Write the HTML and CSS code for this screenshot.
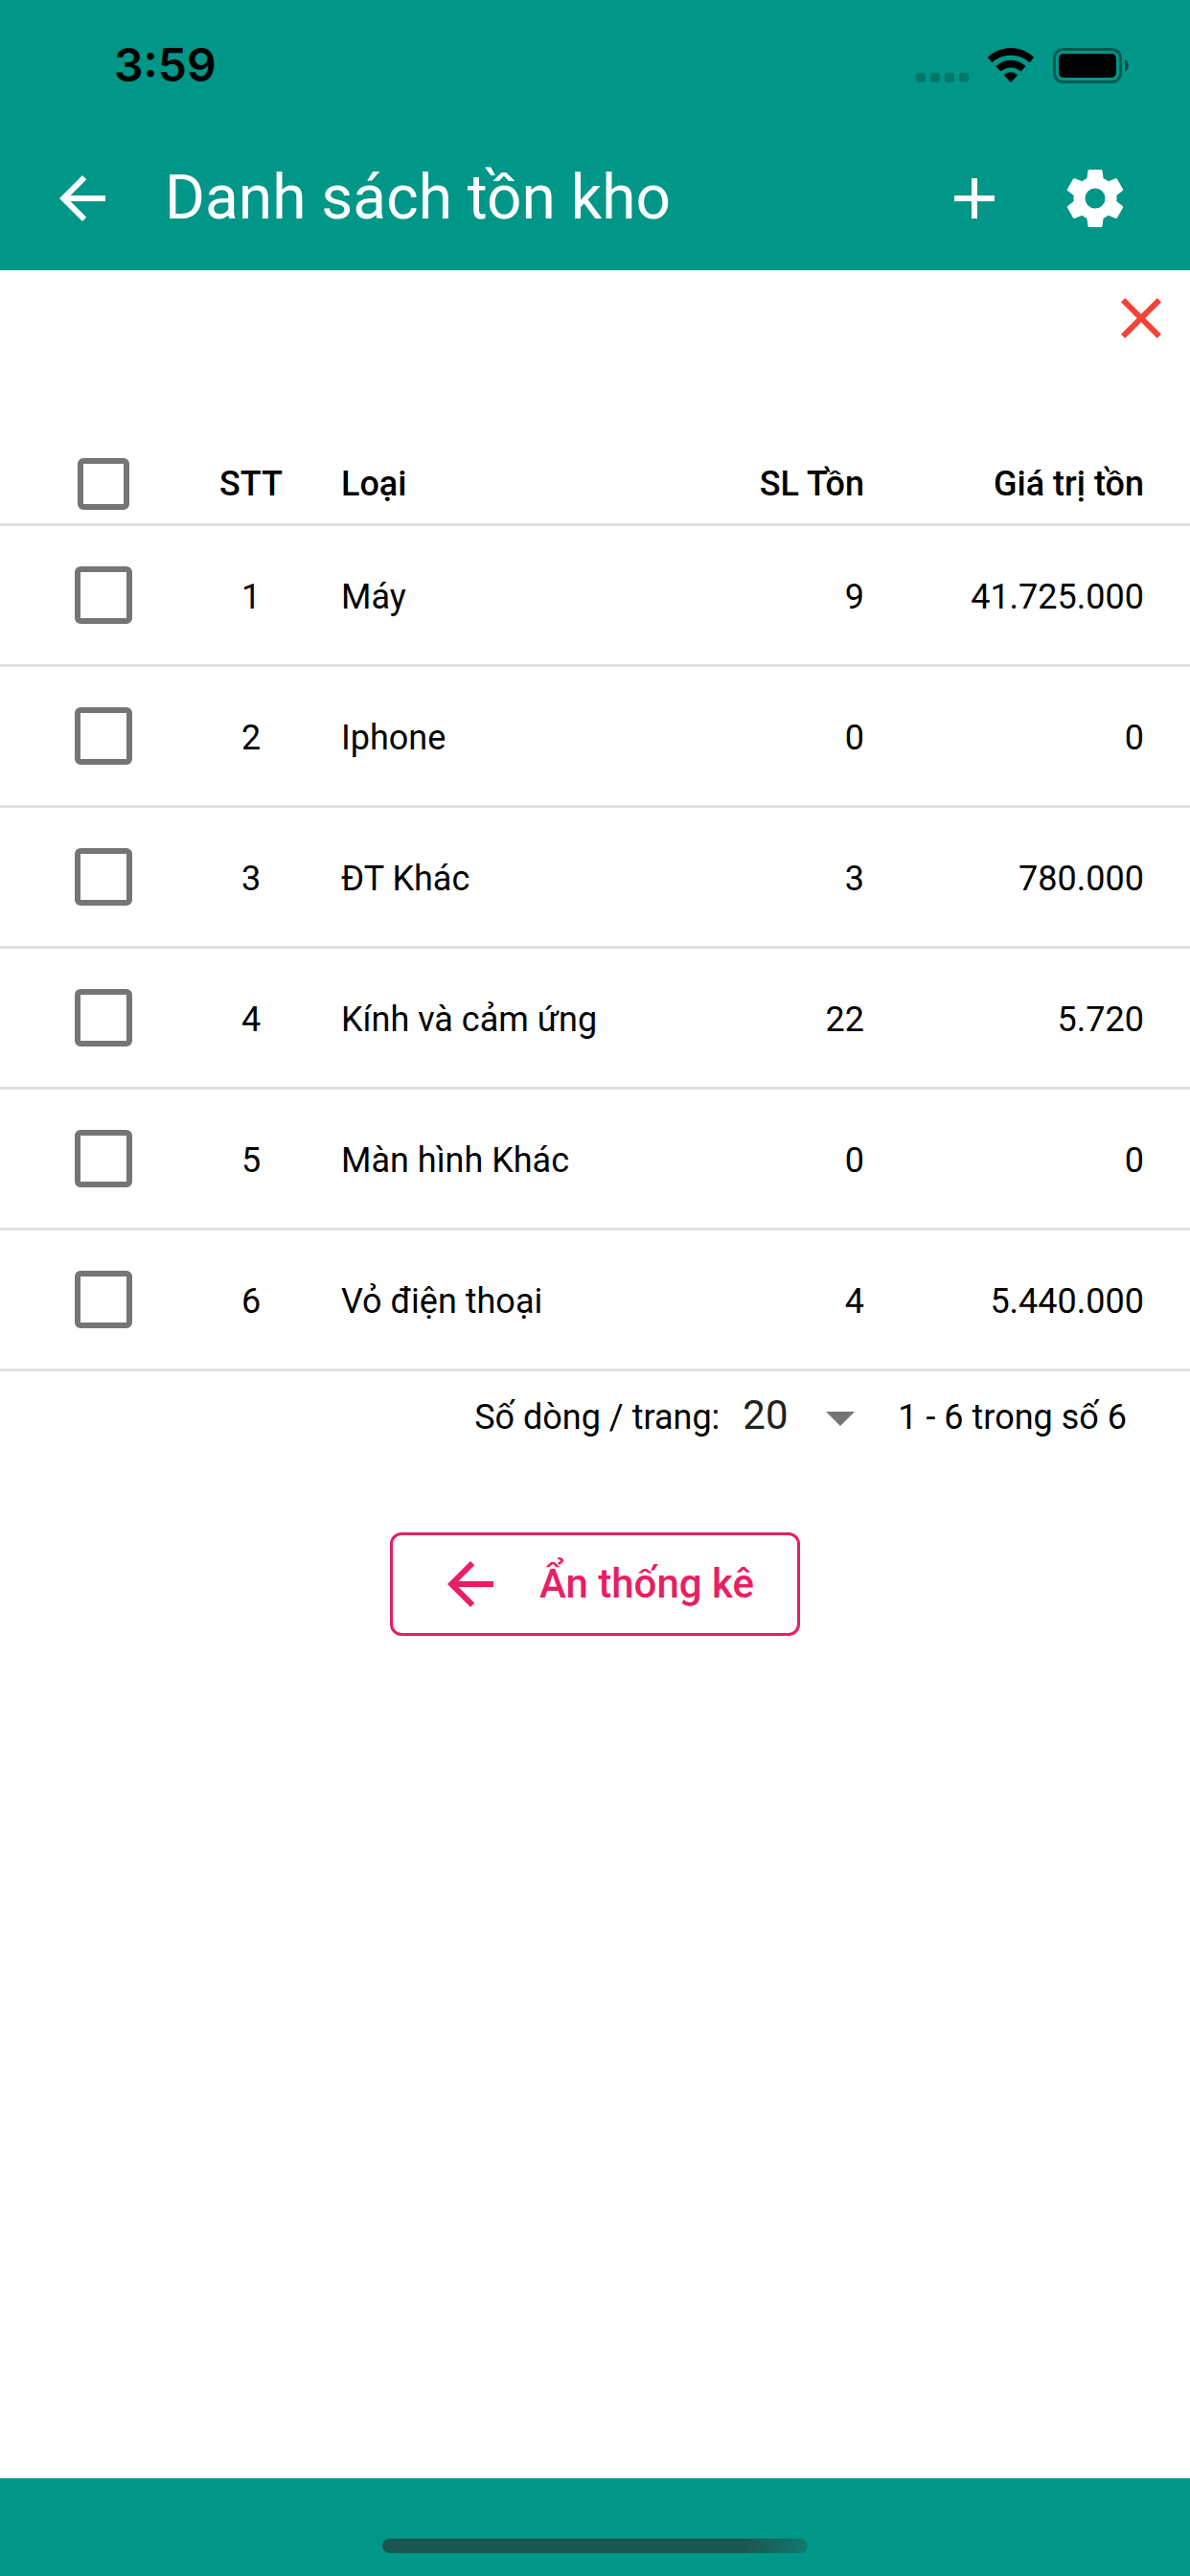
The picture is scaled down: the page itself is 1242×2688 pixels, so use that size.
FILE: index.html
```
<!DOCTYPE html>
<html lang="vi">

<head>
    <meta charset="UTF-8">
    <meta name="viewport" content="width=device-width, initial-scale=1.0">
    <title>Danh sách tồn kho</title>
    <link rel="stylesheet" href="styles.css">
</head>

<body>
    <header class="header">
        <div class="status">
            <span class="time">3:59</span>
            <div class="status-icons">
                <svg width="55" height="36" viewBox="0 0 55 36" fill="#000" fill-opacity=".2">
                    <rect x="0" y="26" width="10" height="10" rx="3" />
                    <rect x="15" y="26" width="10" height="10" rx="3" />
                    <rect x="30" y="26" width="10" height="10" rx="3" />
                    <rect x="45" y="26" width="10" height="10" rx="3" />
                </svg>
                <svg width="48" height="36" viewBox="0 0 48 36">
                    <path d="M24 0C14.800 0 6.500 3.600 .4 9.400q-.6.600 0 1.200L4 14.700q.6.600 1.200 0C10.200 10.300 16.800 7.800 24 7.800s13.800 2.500 18.800 6.900q.6.600 1.200 0l3.600-4.100q.6-.6 0-1.200C41.500 3.600 33.200 0 24 0zM24 12.800c-5.800 0-11 2.200-15 5.800q-.6.600 0 1.200l4 4.300q.6.600 1.200 0c2.600-2.300 6-3.700 9.800-3.700s7.200 1.400 9.800 3.700q.6.600 1.200 0l4-4.300q.6-.6 0-1.200c-4-3.600-9.200-5.800-15-5.800zM24 25.300c-2.500 0-4.800.9-6.500 2.400q-.6.600 0 1.200l5.900 6.500q.6.600 1.200 0l5.900-6.500q.6-.6 0-1.200c-1.700-1.500-4-2.400-6.500-2.400z" />
                </svg>
                <svg width="79" height="37" viewBox="0 0 79 37">
                    <rect x="1.500" y="1.500" width="69" height="34" rx="9" fill="none" stroke="#000" stroke-opacity=".4" stroke-width="3" />
                    <rect x="6" y="6" width="60" height="25" rx="5" />
                    <path d="M75 12c5 2 5 11 0 13z" fill-opacity=".5" />
                </svg>
            </div>
        </div>
        <div class="toolbar">
            <button class="icon-btn" type="button" aria-label="Quay lại">
                <svg class="icon" viewBox="0 0 24 24"><path d="M20 11H7.830l5.590-5.590L12 4l-8 8 8 8 1.410-1.410L7.830 13H20v-2z" /></svg>
            </button>
            <h1 class="title">Danh sách tồn kho</h1>
            <button class="icon-btn" type="button" aria-label="Thêm">
                <svg class="icon" viewBox="0 0 24 24"><path d="M19 13h-6v6h-2v-6H5v-2h6V5h2v6h6v2z" /></svg>
            </button>
            <button class="icon-btn" type="button" aria-label="Cài đặt">
                <svg class="icon" viewBox="0 0 24 24"><path d="M12 15.500A3.500 3.500 0 0 1 8.500 12 3.500 3.500 0 0 1 12 8.500a3.500 3.500 0 0 1 3.500 3.500 3.500 3.500 0 0 1-3.500 3.500m7.430-2.530c.04-.32.07-.64.07-.97 0-.33-.03-.66-.07-1l2.110-1.630c.19-.15.24-.42.12-.64l-2-3.460c-.12-.22-.39-.31-.61-.22l-2.490 1c-.52-.39-1.060-.73-1.690-.98l-.37-2.650A.506.506 0 0 0 14 2h-4c-.25 0-.46.18-.5.42l-.37 2.650c-.63.25-1.170.59-1.690.98l-2.490-1c-.22-.09-.49 0-.61.22l-2 3.460c-.13.22-.07.49.12.64L4.570 11c-.04.34-.07.67-.07 1 0 .33.03.65.07.97l-2.110 1.660c-.19.15-.25.42-.12.64l2 3.460c.12.22.39.3.61.22l2.490-1.010c.52.400 1.060.740 1.690.990l.37 2.650c.04.240.250.420.500.420h4c.25 0 .46-.18.5-.42l.37-2.650c.63-.26 1.170-.59 1.690-.99l2.490 1.010c.22.08.49 0 .61-.22l2-3.460c.12-.22.07-.49-.12-.64l-2.110-1.660z" /></svg>
            </button>
        </div>
    </header>

    <main class="main">
        <div class="close-row">
            <button class="icon-btn close" type="button" aria-label="Đóng">
                <svg class="icon" viewBox="0 0 24 24"><path d="M19 6.410L17.590 5 12 10.590 6.410 5 5 6.410 10.590 12 5 17.590 6.410 19 12 13.410 17.590 19 19 17.590 13.410 12z" /></svg>
            </button>
        </div>

        <table class="table">
            <thead>
                <tr>
                    <th class="check"><input type="checkbox" aria-label="Chọn tất cả"></th>
                    <th class="stt">STT</th>
                    <th class="loai">Loại</th>
                    <th class="sl">SL Tồn</th>
                    <th class="gia">Giá trị tồn</th>
                </tr>
            </thead>
            <tbody>
                <tr>
                    <td class="check"><input type="checkbox" aria-label="Chọn Máy"></td>
                    <td class="stt">1</td>
                    <td class="loai">Máy</td>
                    <td class="sl">9</td>
                    <td class="gia">41.725.000</td>
                </tr>
                <tr>
                    <td class="check"><input type="checkbox" aria-label="Chọn Iphone"></td>
                    <td class="stt">2</td>
                    <td class="loai">Iphone</td>
                    <td class="sl">0</td>
                    <td class="gia">0</td>
                </tr>
                <tr>
                    <td class="check"><input type="checkbox" aria-label="Chọn ĐT Khác"></td>
                    <td class="stt">3</td>
                    <td class="loai">ĐT Khác</td>
                    <td class="sl">3</td>
                    <td class="gia">780.000</td>
                </tr>
                <tr>
                    <td class="check"><input type="checkbox" aria-label="Chọn Kính và cảm ứng"></td>
                    <td class="stt">4</td>
                    <td class="loai">Kính và cảm ứng</td>
                    <td class="sl">22</td>
                    <td class="gia">5.720</td>
                </tr>
                <tr>
                    <td class="check"><input type="checkbox" aria-label="Chọn Màn hình Khác"></td>
                    <td class="stt">5</td>
                    <td class="loai">Màn hình Khác</td>
                    <td class="sl">0</td>
                    <td class="gia">0</td>
                </tr>
                <tr>
                    <td class="check"><input type="checkbox" aria-label="Chọn Vỏ điện thoại"></td>
                    <td class="stt">6</td>
                    <td class="loai">Vỏ điện thoại</td>
                    <td class="sl">4</td>
                    <td class="gia">5.440.000</td>
                </tr>
            </tbody>
        </table>

        <div class="paging">
            <label for="rows">Số dòng / trang:</label>
            <div class="select">
                <select id="rows">
                    <option>20</option>
                    <option>50</option>
                    <option>100</option>
                </select>
                <svg class="icon" viewBox="0 0 24 24"><path d="M7 10l5 5 5-5z" /></svg>
            </div>
            <span>1 - 6 trong số 6</span>
        </div>

        <button class="hide-btn" type="button">
            <svg class="icon" viewBox="0 0 24 24"><path d="M20 11H7.830l5.590-5.590L12 4l-8 8 8 8 1.410-1.410L7.830 13H20v-2z" /></svg>
            Ẩn thống kê
        </button>
    </main>

    <footer class="footer">
        <div class="home-bar"></div>
    </footer>
</body>

</html>
```
FILE: styles.css
```
* {
    margin: 0;
    padding: 0;
    box-sizing: border-box;
}

body {
    display: flex;
    flex-direction: column;
    min-height: 100vh;
    font-family: Roboto, "Noto Sans", sans-serif;
    font-size: 36px;
    line-height: 48px;
    color: #000;
    background-color: #fff;
}

button {
    font: inherit;
    color: inherit;
    border: none;
    background: none;
    cursor: pointer;
}

svg {
    display: block;
}

.icon {
    width: 72px;
    height: 72px;
    fill: currentColor;
}

.header {
    color: #fff;
    background-color: #009688;
}

.status {
    display: flex;
    align-items: center;
    justify-content: space-between;
    height: 132px;
    padding: 4px 64px 0 119px;
    color: #000;
}

.time {
    font-family: Inter, sans-serif;
    font-size: 48px;
    font-weight: 600;
}

.status-icons {
    display: flex;
    align-items: center;
    gap: 20px;
}

.toolbar {
    display: flex;
    align-items: center;
    height: 150px;
    padding: 0 63px 0 50px;
}

.toolbar .icon-btn + .icon-btn {
    margin-left: 54px;
}

.title {
    flex: 1;
    padding-left: 50px;
    font-size: 64px;
    line-height: 72px;
    font-weight: 400;
}

.main {
    flex: 1;
}

.close-row {
    display: flex;
    justify-content: flex-end;
    height: 177px;
    padding: 14px 15px 0;
}

.close {
    height: 72px;
    color: #f44336;
}

.table {
    width: 100%;
    table-layout: fixed;
    border-collapse: separate;
    border-spacing: 0;
}

.table th,
.table td {
    height: 147px;
    padding: 4px 48px 0;
    border-bottom: 3px solid #e0e0e0;
    font-weight: 400;
    text-align: left;
    white-space: nowrap;
}

.table th {
    height: 90px;
    font-weight: 500;
}

.table .check {
    width: 216px;
}

.table td.check {
    padding-top: 0;
}

.table .stt {
    width: 92px;
    padding-left: 0;
    padding-right: 0;
    text-align: center;
}

.table .sl {
    width: 240px;
    text-align: right;
}

.table .gia {
    width: 292px;
    text-align: right;
}

.table input {
    appearance: none;
    display: block;
    width: 60px;
    height: 60px;
    margin: 0 auto;
    border: 6px solid #757575;
    border-radius: 6px;
}

.table th input {
    width: 54px;
    height: 54px;
}

.table input:checked {
    background-color: #009688;
}

.paging {
    display: flex;
    align-items: baseline;
    justify-content: flex-end;
    height: 96px;
    padding: 12px 66px 0 0;
}

/* mũi tên nằm đè lên select */
.select {
    display: grid;
    align-items: center;
    justify-items: end;
    margin: 0 24px;
}

.select select,
.select .icon {
    grid-area: 1 / 1;
}

.select select {
    appearance: none;
    width: 138px;
    padding-bottom: 4px;
    border: none;
    background: none;
    font: inherit;
    font-size: 42px;
    color: #212121;
}

.select .icon {
    color: #757575;
    pointer-events: none;
}

.hide-btn {
    display: flex;
    align-items: center;
    gap: 36px;
    height: 108px;
    margin: 72px auto 0;
    padding: 0 45px;
    border: 3px solid #e91e63;
    border-radius: 12px;
    font-size: 42px;
    font-weight: 500;
    color: #e91e63;
}

.footer {
    display: flex;
    align-items: flex-end;
    justify-content: center;
    height: 102px;
    padding-bottom: 24px;
    background-color: #009688;
}

.home-bar {
    width: 444px;
    height: 15px;
    border-radius: 8px;
    background: linear-gradient(to right, #1b5650 85%, #0f7a6f);
}
```
